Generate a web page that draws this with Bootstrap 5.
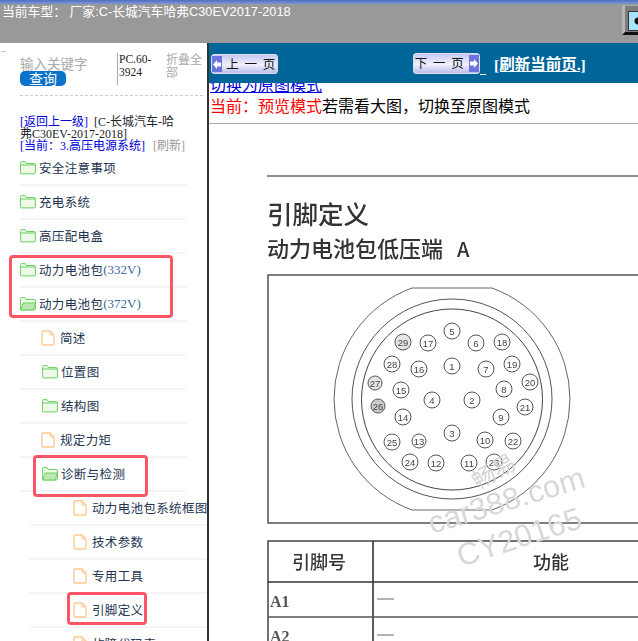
<!DOCTYPE html>
<html lang="zh"><head><meta charset="utf-8">
<link rel="stylesheet" href="https://cdn.jsdelivr.net/npm/bootstrap@5.3.0/dist/css/bootstrap.min.css">
<style>
html,body{height:641px;overflow:hidden;margin:0;background:#fff;font-family:"Noto Sans CJK SC","Liberation Sans",sans-serif}
.topstrip{height:43px;background:linear-gradient(#4f6fc4 0,#7f97d8 4px,#999 4px);color:#fff;font-family:"Liberation Sans","Noto Sans CJK SC",sans-serif;font-size:12.8px;line-height:16px;padding:4px 0 0 2px;overflow:hidden}
.topbtn{width:16px;height:30px;margin-top:1px;background:#7d7d7d;border-left:3px solid #b5b5b5;border-top:1px solid #aaa;border-bottom:3px solid #111;padding:5px 0 0 3px}
.topbtn i{display:block;height:20px;background:#a9e4fb radial-gradient(circle at 100% 50%,#111 3px,transparent 4px);border:1px solid #333;border-right:0}
.mainrow{height:598px}
.sidepane{width:207px;overflow:hidden;font-family:"Liberation Serif","Noto Sans CJK SC",serif;position:relative}
.tinydots{position:absolute;left:1px;top:2px;font-size:9px;line-height:9px;color:#633}
.vsep{width:2px;background:#333}
.viewpane{width:429px;overflow:hidden}
.searchbox{margin:0 0 0 20px;width:183px;height:53px;padding-top:10px;border-bottom:1px dashed #ccc}
.kwcol{width:97px;color:#aaa;font-size:13.5px;line-height:14px;padding-top:3px;font-family:"Noto Sans CJK SC",sans-serif}
.querybtn{width:46px;height:15px;background:#0a72c8;border-radius:5px;color:#fff;font-size:14px;line-height:15px;text-align:center;margin-top:1px}
.pcol{width:48px;border-left:1px solid #aaa;height:32px;padding-left:1px;font-size:11.5px;line-height:13px;color:#222}
.foldcol{width:36px;color:#aaa;font-size:12px;line-height:12.5px;font-family:"Noto Sans CJK SC",sans-serif;margin-left:1px}
.crumbs{margin:20px 0 0 20px;width:165px;font-size:12px;line-height:12px;height:36px}
.crumbs a{color:#00d;text-decoration:none}
.crumbs .refresh{color:#999;margin-left:8px}
.treeitem{height:34px;display:flex;align-items:center;border-bottom:2px solid #f5f5f5;color:#233450;font-size:12.5px;white-space:nowrap;letter-spacing:.35px;font-family:"Noto Sans CJK SC",sans-serif}
.lv0{margin-left:20px;width:166px}
.lv1{margin-left:20px;width:166px;padding-left:21px}
.lv1 .foldicon{margin-left:1px}
.lv2{margin-left:30px;width:177px;padding-left:43px}
.foldicon{flex:none;margin-right:3px}
.fileicon{flex:none;margin-right:5px}
.volt{font-family:"Liberation Serif",serif;color:#3b6a9e;font-size:13px;letter-spacing:0}
.redbox{position:absolute;border:3px solid #fb5566;border-radius:4px;pointer-events:none}
.pagerbar{height:40px;background:#006699;padding:11px 0 0 2px}
.xpbtn{width:67px;height:20px;border:1px solid #dde;border-radius:3px;background:linear-gradient(#c5c9f2,#f0f0ff 55%,#b9bdec);font-size:12.5px;line-height:18px;color:#111;text-align:center;font-family:"Noto Sans CJK SC",sans-serif;position:relative;letter-spacing:1.5px;word-spacing:0}
.xpbtn::before{content:"";position:absolute;top:1px;bottom:1px;width:10px;background:#6a74dc}
.xpprev{padding-left:14px}.xpprev::before{left:0}
.xpnext{padding-right:13px;margin-left:135px;margin-top:-1px;height:21px}.xpnext::before{right:0}
.xpbtn svg{position:absolute;top:5px;z-index:1}
.xpprev svg{left:1px}.xpnext svg{right:1px}
.reloadlink{color:#fff;font-weight:700;font-size:15.5px;line-height:18px;text-decoration:underline;font-family:"Liberation Serif","Noto Sans CJK SC",serif;margin-left:8px;margin-top:2px}
.spacerul{width:6px;height:1px;background:#fff;margin-top:20px}
.modehead{height:41px;border-bottom:1px solid #aaa;font-size:16px;line-height:20px;overflow:hidden;padding-left:1px}
.modeswitch{display:block;color:#00d;text-decoration:underline;margin-top:-9px}
.modenow{color:#000;margin-top:1px}
.modenow span{color:#f00}
.docpage{height:517px;overflow:hidden;font-family:"Noto Sans CJK SC",sans-serif}
.docsvg{display:block;filter:blur(.35px)}
.doctext{fill:#333;font-weight:500}
.pin{font:500 9.5px "Liberation Sans",sans-serif;fill:#444;text-anchor:middle}
</style></head><body>
<div class="topstrip d-flex justify-content-between"><div>当前车型： 厂家:C-长城汽车哈弗C30EV2017-2018</div><div class="topbtn"><i></i></div></div>
<div class="mainrow d-flex position-relative">
<div class="sidepane">
<div class="tinydots">..</div>
<div class="searchbox d-flex"><div class="kwcol">输入关键字<div class="querybtn">查询</div></div><div class="pcol">PC.60-3924</div><div class="foldcol">折叠全部</div></div>
<div class="crumbs"><a href="#">[返回上一级]</a> &nbsp;[C-长城汽车-哈弗C30EV-2017-2018]<br><a href="#">[当前：3.高压电源系统]</a><span class="refresh">[刷新]</span></div>
<div id="tree"></div>
</div>
<div class="vsep"></div>
<div class="viewpane">
<div class="pagerbar d-flex"><div class="xpbtn xpprev"><svg width="8" height="9" viewBox="0 0 8 9"><path d="M0 4.5 4 0v2.5h4v4H4V9z" fill="#fff"/></svg>上 一 页</div><div class="xpbtn xpnext"><svg width="8" height="9" viewBox="0 0 8 9"><path d="M8 4.5 4 0v2.5H0v4h4V9z" fill="#fff"/></svg>下 一 页</div><div class="spacerul"></div><a class="reloadlink">[刷新当前页.]</a></div>
<div class="modehead"><a class="modeswitch" href="#">切换为原图模式</a><div class="modenow"><span>当前：预览模式</span>若需看大图，切换至原图模式</div></div>
<div class="docpage"><svg class="docsvg" id="doc" width="429" height="517" viewBox="209 124 429 517"></svg></div>
</div>
<div class="redbox" style="left:9px;top:212px;width:164px;height:63px"></div>
<div class="redbox" style="left:33px;top:412px;width:115px;height:42px"></div>
<div class="redbox" style="left:67px;top:549px;width:80px;height:33px"></div>
</div>
<script>
const folder=(open)=>`<svg class="foldicon" width="16" height="14" viewBox="0 0 16 14"><path d="M.5 2.5V1.6q0-1 1-1h3.6l1.3 1.9h8q1 0 1 1v8.4q0 1-1 1h-13q-1 0-1-1z" fill="#eef9ea" stroke="#69cf5e"/>${open?'<path d="M.8 13 3.2 6h12.3l-2.3 7z" fill="#bde6b4" stroke="#69cf5e"/>':'<path d="M.5 4h15" stroke="#69cf5e"/>'}</svg>`;
const file=`<svg class="fileicon" width="14" height="16" viewBox="0 0 14 16"><path d="M1 2q0-1 1-1h7l4 4v9q0 1-1 1H2q-1 0-1-1z" fill="#fff" stroke="#fbc88e" stroke-width="1.3"/><path d="M9 1v4h4" fill="none" stroke="#fbc88e"/></svg>`;
const items=[[0,'f','安全注意事项'],[0,'f','充电系统'],[0,'f','高压配电盒'],[0,'f','动力电池包<span class="volt">(332V)</span>'],[0,'o','动力电池包<span class="volt">(372V)</span>'],[1,'d','简述'],[1,'f','位置图'],[1,'f','结构图'],[1,'d','规定力矩'],[1,'o','诊断与检测'],[2,'d','动力电池包系统框图'],[2,'d','技术参数'],[2,'d','专用工具'],[2,'d','引脚定义'],[2,'d','故障代码表']];
document.getElementById('tree').innerHTML=items.map(([l,t,s])=>`<div class="treeitem lv${l}">${t=='d'?file:folder(t=='o')}${s}</div>`).join('');
const pins=[[5,452,331],[17,428,343],[29,403,342],[6,476,343],[18,502,342],[28,392,364],[16,419,369],[1,452,366],[7,486,369],[19,512,364],[27,375,383],[15,401,390],[4,432,400],[2,472,400],[8,504,389],[20,530,382],[26,378,406],[14,403,417],[9,501,417],[21,525,407],[3,452,433],[25,392,442],[13,419,441],[10,485,440],[22,513,441],[24,410,462],[12,436,463],[11,469,463],[23,494,462]];
let s=`<rect x="209" y="124" width="429" height="517" fill="#fff"/>
<path d="M267 176H638" stroke="#666" stroke-width="1.6"/>
<text x="267" y="224" font-size="25.5" class="doctext">引脚定义</text>
<text x="267" y="257" font-size="22" class="doctext">动力电池包低压端<tspan dx="14" font-size="20">A</tspan></text>
<rect x="268" y="275" width="380" height="248" fill="none" stroke="#555" stroke-width="1.5"/>
<path d="M412 288H492A118 118 0 0 1 492 510H412A118 118 0 0 1 412 288Z" fill="none" stroke="#666"/>
<circle cx="452" cy="399" r="100" fill="none" stroke="#555"/>
<circle cx="452" cy="399.5" r="90.5" fill="none" stroke="#444"/>`;
for(const[n,x,y]of pins){s+=`<circle cx="${x}" cy="${y}" r="${n==27||n==26||n==13?7:8}" fill="${n==26?'#ccc':n==27||n==29?'#e4e4e4':'#fff'}" stroke="#555"/><text class="pin" x="${x}" y="${y+3.5}">${n}</text>`}
s+=`<rect x="268" y="541" width="380" height="120" fill="none" stroke="#444" stroke-width="1.5"/>
<path d="M373 541V660M268 582H638" stroke="#333" stroke-width="1.6"/><path d="M268 617H638" stroke="#555" stroke-width="1.6"/>
<text x="292" y="569" font-size="18" class="doctext">引脚号</text><text x="533" y="569" font-size="18" class="doctext">功能</text>
<text x="270" y="607" font-size="16" fill="#555" font-weight="700" font-family="Liberation Serif">A1</text><text x="270" y="642" font-size="16" fill="#555" font-weight="700" font-family="Liberation Serif">A2</text>
<path d="M377 599H394M377 635H394" stroke="#666"/>
<text transform="rotate(-30 478 490)" x="478" y="490" font-size="23" fill="#d4d4d4">畅易</text>
<text transform="rotate(-17 432 534)" x="432" y="534" font-size="31" fill="#d8d8d8" font-family="Liberation Sans">car388.com</text>
<text transform="rotate(-18 461 567)" x="461" y="567" font-size="31" fill="#d8d8d8" font-family="Liberation Sans">CY20165</text>`;
document.getElementById('doc').innerHTML=s;
</script>
<script src="https://cdn.jsdelivr.net/npm/bootstrap@5.3.0/dist/js/bootstrap.bundle.min.js"></script>
</body></html>
